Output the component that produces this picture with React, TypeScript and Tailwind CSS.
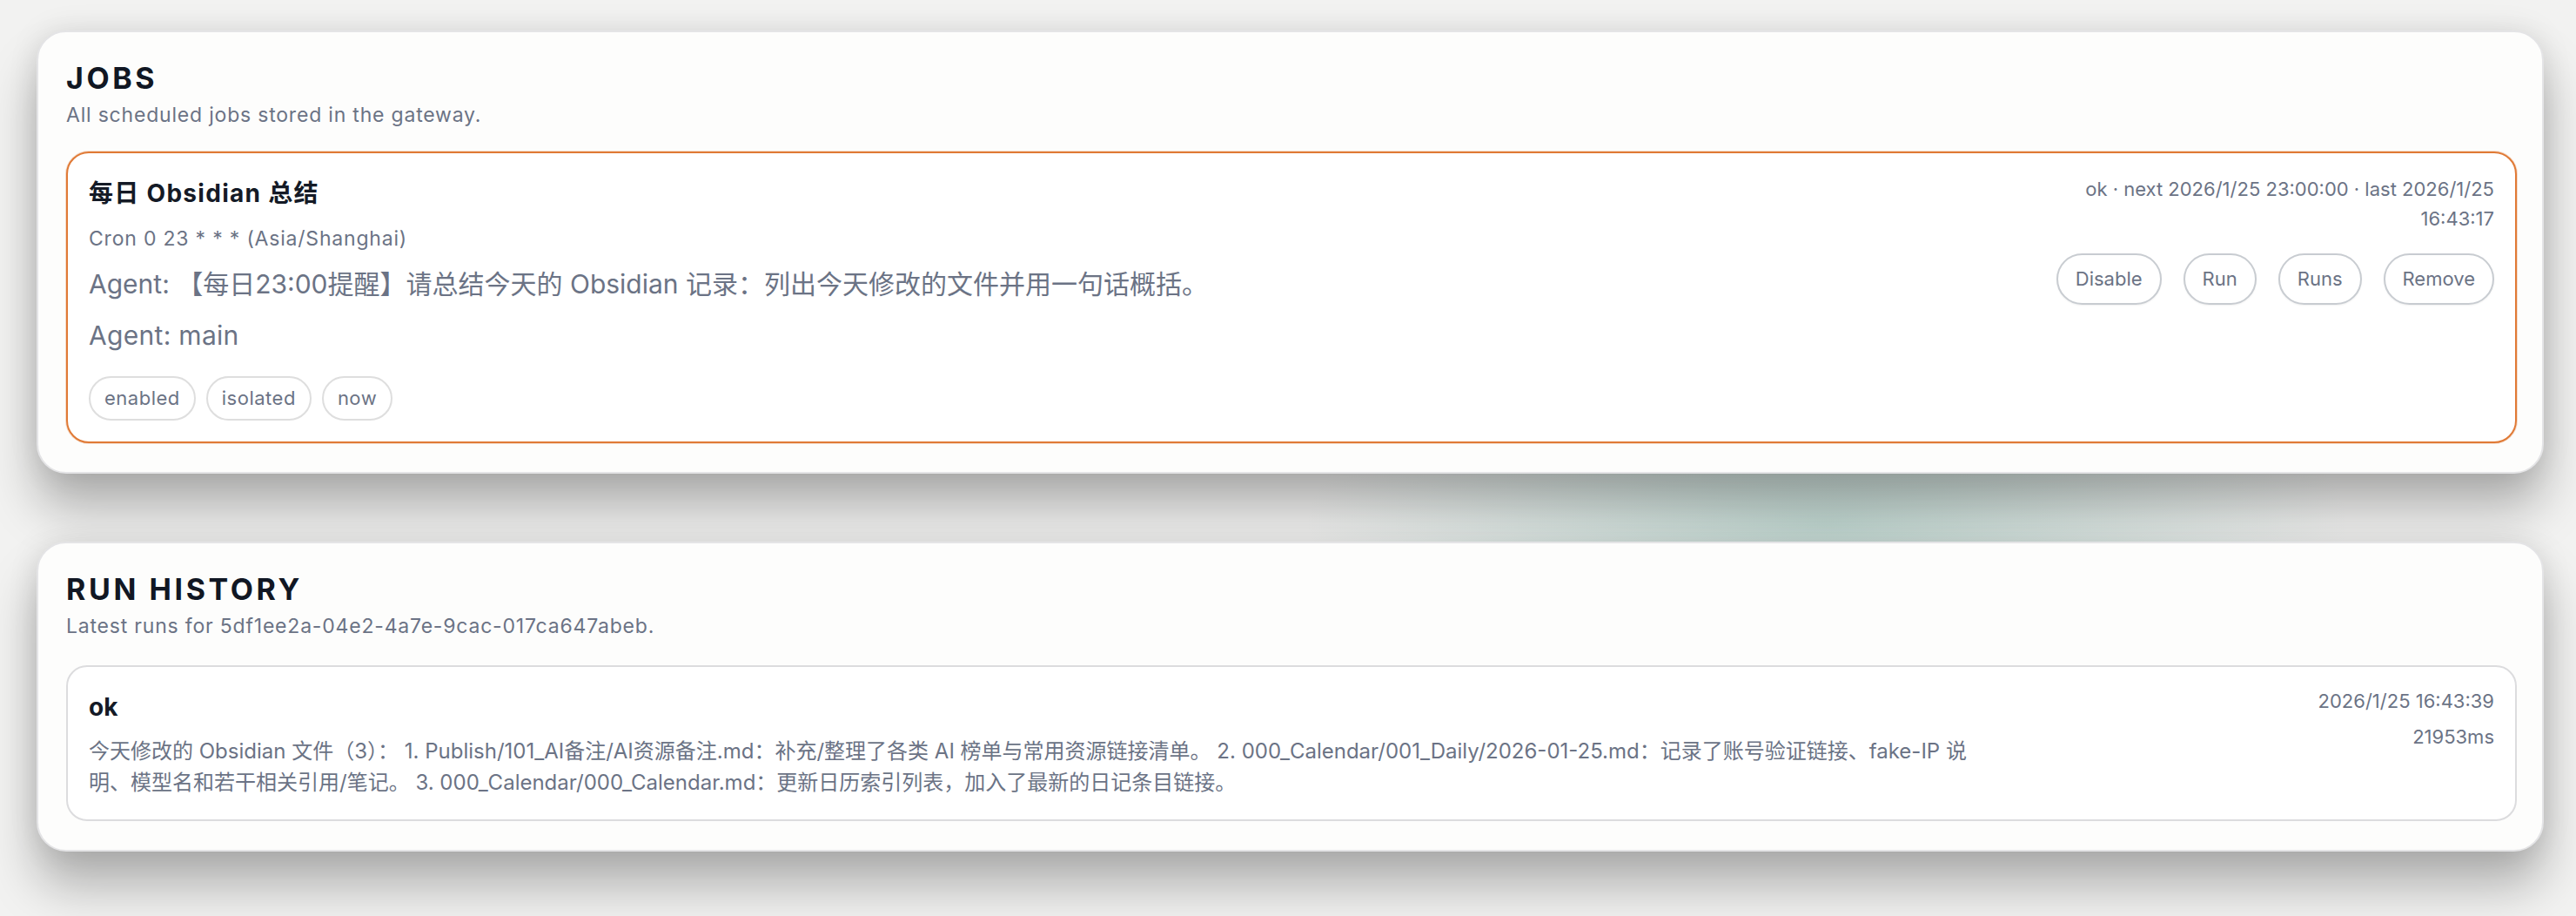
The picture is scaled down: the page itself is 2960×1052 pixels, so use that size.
import React from "react";

const job = {
  name: "每日 Obsidian 总结",
  cron: "Cron 0 23 * * * (Asia/Shanghai)",
  prompt: "Agent: 【每日23:00提醒】请总结今天的 Obsidian 记录：列出今天修改的文件并用一句话概括。",
  agent: "Agent: main",
  tags: ["enabled", "isolated", "now"],
  meta: "ok · next 2026/1/25 23:00:00 · last 2026/1/25 16:43:17",
};

const run = {
  status: "ok",
  summary:
    "今天修改的 Obsidian 文件（3）： 1. Publish/101_AI备注/AI资源备注.md：补充/整理了各类 AI 榜单与常用资源链接清单。 2. 000_Calendar/001_Daily/2026-01-25.md：记录了账号验证链接、fake-IP 说明、模型名和若干相关引用/笔记。 3. 000_Calendar/000_Calendar.md：更新日历索引列表，加入了最新的日记条目链接。",
  time: "2026/1/25 16:43:39",
  duration: "21953ms",
};

const actions = ["Disable", "Run", "Runs", "Remove"];

function Panel({ title, sub, children }: { title: string; sub: string; children: React.ReactNode }) {
  return (
    <section className="rounded-[34px] border-2 border-[#e4e4e6] bg-[#fdfdfc] pl-[32px] pr-[29px] pt-[33px] pb-[33px] shadow-[0_40px_56px_rgba(0,0,0,0.27),0_0_34px_rgba(0,0,0,0.10)]">
      <h2 className="text-[34px] leading-[40px] font-bold tracking-[3.6px] text-[#111723]">{title}</h2>
      <p className="mt-[6px] text-[23px] leading-[32px] tracking-[0.8px] text-[#6b7385]">{sub}</p>
      {children}
    </section>
  );
}

export default function App() {
  return (
    <div className="min-h-screen w-full bg-[#f2f2f1] bg-[radial-gradient(ellipse_600px_200px_at_2100px_600px,rgba(95,165,148,0.32),transparent)] pl-[42px] pr-[37px] pt-[35px] pb-[80px] font-['Inter','Noto_Sans_CJK_SC',sans-serif]">
      <Panel title="JOBS" sub="All scheduled jobs stored in the gateway.">
        {/* Job card */}
        <div className="mt-[26px] flex items-start justify-between rounded-[26px] border-2 border-[#e07a36] bg-white p-[24px] shadow-[0_0_0_1px_rgba(224,122,54,0.25)]">
          <div className="flex flex-col">
            <div className="text-[28px] leading-[44px] font-bold tracking-[1.3px] text-[#141a26]">{job.name}</div>
            <div className="mt-[14px] text-[23px] leading-[33px] tracking-[0.8px] text-[#6b7385]">{job.cron}</div>
            <div className="mt-[13px] text-[30px] leading-[45px] text-[#6b7385]">{job.prompt}</div>
            <div className="mt-[14px] text-[30px] leading-[45px] tracking-[0.3px] text-[#6b7385]">{job.agent}</div>
            <div className="mt-[24px] flex gap-[12px]">
              {job.tags.map((t) => (
                <span
                  key={t}
                  className="flex h-[51px] items-center rounded-full border-2 border-[#dedede] px-[16px] text-[22px] tracking-[0.5px] text-[#6b7385]"
                >
                  {t}
                </span>
              ))}
            </div>
          </div>
          <div className="flex flex-col items-end">
            <div className="w-[520px] text-right text-[22px] leading-[34px] text-[#6b7385]">{job.meta}</div>
            <div className="mt-[23px] flex gap-[25px]">
              {actions.map((a) => (
                <button
                  key={a}
                  className="h-[59px] rounded-full border-2 border-[#c8ccd1] bg-white px-[20px] text-[22px] text-[#6b7385] shadow-[0_1px_2px_rgba(0,0,0,0.06)]"
                >
                  {a}
                </button>
              ))}
            </div>
          </div>
        </div>
      </Panel>

      <div className="mt-[78px]">
        <Panel title="RUN HISTORY" sub="Latest runs for 5df1ee2a-04e2-4a7e-9cac-017ca647abeb.">
          {/* Run entry */}
          <div className="mt-[29px] flex items-start justify-between rounded-[24px] border-2 border-[#dcdcde] bg-white p-[24px]">
            <div className="min-w-0 flex-1">
              <div className="text-[28px] leading-[44px] font-bold text-[#141a26]">{run.status}</div>
              <p className="mt-[11px] max-w-[2160px] text-[24px] leading-[36px] text-[#6b7385]">{run.summary}</p>
            </div>
            <div className="flex flex-col items-end text-[22px] leading-[30px] text-[#6b7385]">
              <div>{run.time}</div>
              <div className="mt-[11px]">{run.duration}</div>
            </div>
          </div>
        </Panel>
      </div>
    </div>
  );
}
